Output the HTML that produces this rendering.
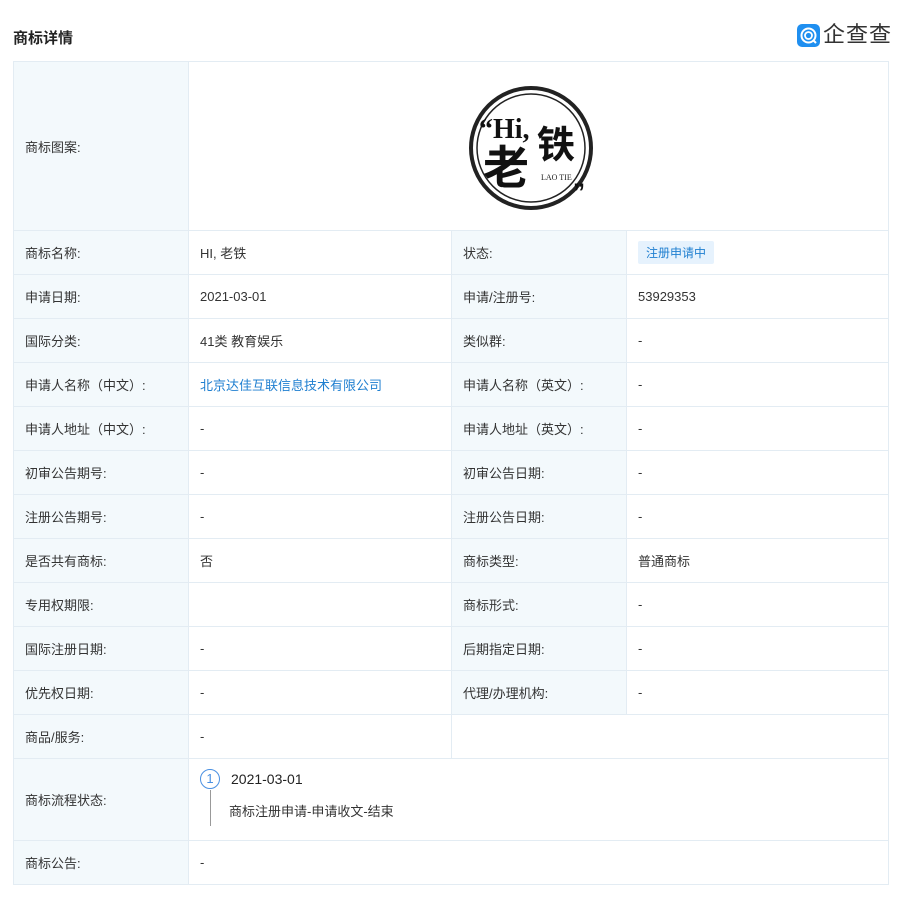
<!DOCTYPE html>
<html><head><meta charset="utf-8"><style>
body{margin:0;background:#fff;font-family:"Liberation Sans","Noto Sans CJK SC",sans-serif;color:#333;font-size:13px;width:901px;height:904px;position:relative;overflow:hidden}
.title{position:absolute;left:13px;top:27px;font-size:15px;font-weight:bold;color:#222}
.logo{position:absolute;left:797px;top:23px;display:flex;align-items:center}
.logo .ic{width:23px;height:23px;background:#1f8ff0;border-radius:5px;position:relative}
.logo .t{font-size:22px;color:#333;margin-left:3px;letter-spacing:1px;line-height:24px}
table{position:absolute;left:13px;top:61px;border-collapse:collapse;table-layout:fixed;width:875px}
td{border:1px solid #e3ecf3;padding:0 0 0 11px;height:43px;vertical-align:middle}
td.l{background:#f3f9fc}
a{color:#1f7fd0;text-decoration:none}
.badge{display:inline-block;background:#e6f2fd;color:#1f7fd0;font-size:12px;padding:3px 8px;border-radius:2px}
</style></head><body>
<div class="title">商标详情</div>
<div class="logo"><div class="ic"><svg width="23" height="23" viewBox="0 0 23 23"><circle cx="11.5" cy="11.5" r="7" fill="none" stroke="#fff" stroke-width="2"/><circle cx="11.5" cy="11.5" r="3.5" fill="none" stroke="#fff" stroke-width="1.8"/><path d="M16 16l3 3" stroke="#fff" stroke-width="2"/></svg></div><span class="t">企查查</span></div>
<table>
<colgroup><col style="width:175px"><col style="width:263px"><col style="width:175px"><col style="width:262px"></colgroup>
<tr><td class="l" style="height:168px">商标图案:</td><td colspan="3" style="padding:0;position:relative">
<svg width="140" height="140" viewBox="0 0 140 140" style="position:absolute;left:272px;top:14px">
<circle cx="70" cy="72" r="60" fill="none" stroke="#222" stroke-width="4"/>
<circle cx="70" cy="72" r="54" fill="none" stroke="#222" stroke-width="1.5"/>
<text x="18" y="62" font-size="28" font-weight="bold" font-family="Liberation Serif,serif" fill="#111">“Hi,</text>
<text x="22" y="108" font-size="46" font-weight="bold" fill="#111" font-family="Noto Sans CJK SC,sans-serif">老</text>
<text x="76" y="82" font-size="38" font-weight="bold" fill="#111" font-family="Noto Sans CJK SC,sans-serif">铁</text>
<text x="80" y="104" font-size="8" fill="#222" font-family="Liberation Serif,serif">LAO TIE</text>
<text x="112" y="124" font-size="24" font-weight="bold" fill="#111">”</text>
</svg></td></tr>
<tr><td class="l">商标名称:</td><td>HI, 老铁</td><td class="l">状态:</td><td><span class="badge">注册申请中</span></td></tr>
<tr><td class="l">申请日期:</td><td>2021-03-01</td><td class="l">申请/注册号:</td><td>53929353</td></tr>
<tr><td class="l">国际分类:</td><td>41类 教育娱乐</td><td class="l">类似群:</td><td>-</td></tr>
<tr><td class="l">申请人名称（中文）:</td><td><a>北京达佳互联信息技术有限公司</a></td><td class="l">申请人名称（英文）:</td><td>-</td></tr>
<tr><td class="l">申请人地址（中文）:</td><td>-</td><td class="l">申请人地址（英文）:</td><td>-</td></tr>
<tr><td class="l">初审公告期号:</td><td>-</td><td class="l">初审公告日期:</td><td>-</td></tr>
<tr><td class="l">注册公告期号:</td><td>-</td><td class="l">注册公告日期:</td><td>-</td></tr>
<tr><td class="l">是否共有商标:</td><td>否</td><td class="l">商标类型:</td><td>普通商标</td></tr>
<tr><td class="l">专用权期限:</td><td></td><td class="l">商标形式:</td><td>-</td></tr>
<tr><td class="l">国际注册日期:</td><td>-</td><td class="l">后期指定日期:</td><td>-</td></tr>
<tr><td class="l">优先权日期:</td><td>-</td><td class="l">代理/办理机构:</td><td>-</td></tr>
<tr><td class="l">商品/服务:</td><td>-</td><td colspan="2"></td></tr>
<tr><td class="l" style="height:81px">商标流程状态:</td><td colspan="3" style="position:relative">
<div style="position:absolute;left:11px;top:10px;width:18px;height:18px;border:1px solid #4a90e2;border-radius:50%;color:#4a90e2;text-align:center;line-height:18px;font-size:13px">1</div>
<div style="position:absolute;left:21px;top:31px;width:1px;height:36px;background:#999"></div>
<div style="position:absolute;left:42px;top:12px;font-size:14px;color:#222">2021-03-01</div>
<div style="position:absolute;left:40px;top:42px;color:#333">商标注册申请-申请收文-结束</div>
</td></tr>
<tr><td class="l">商标公告:</td><td colspan="3">-</td></tr>
</table>
</body></html>
